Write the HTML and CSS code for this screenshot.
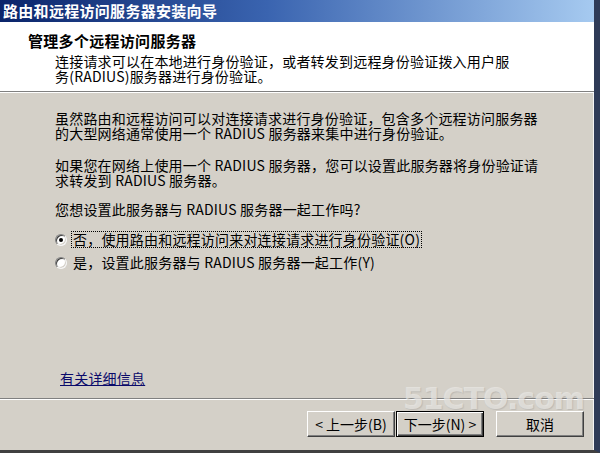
FILE: index.html
```html
<!DOCTYPE html>
<html lang="zh-CN">
  <head>
    <meta charset="UTF-8" />
    <title>路由和远程访问服务器安装向导</title>
    <link rel="stylesheet" href="styles.css">
  </head>
  <body>
    <div class="window">
      <div class="titlebar">路由和远程访问服务器安装向导</div>

      <div class="header">
        <div class="header-title">管理多个远程访问服务器</div>
        <div class="header-sub">
          连接请求可以在本地进行身份验证，或者转发到远程身份验证拨入用户服<br>务(RADIUS)服务器进行身份验证。
        </div>
      </div>

      <div class="content">
        <p class="para">虽然路由和远程访问可以对连接请求进行身份验证，包含多个远程访问服务器<br>的大型网络通常使用一个 RADIUS 服务器来集中进行身份验证。</p>
        <p class="para">如果您在网络上使用一个 RADIUS 服务器，您可以设置此服务器将身份验证请<br>求转发到 RADIUS 服务器。</p>
        <p class="para question">您想设置此服务器与 RADIUS 服务器一起工作吗?</p>

        <div class="options">
          <label class="option">
            <span class="radio checked"></span>
            <span class="option-text focused">否，使用路由和远程访问来对连接请求进行身份验证(<u>O</u>)</span>
          </label>
          <label class="option">
            <span class="radio"></span>
            <span class="option-text">是，设置此服务器与 RADIUS 服务器一起工作(<u>Y</u>)</span>
          </label>
        </div>

        <a class="more-info" href="#">有关详细信息</a>
      </div>

      <div class="footer">
        <button class="btn">&lt; 上一步(<u>B</u>)</button>
        <button class="btn btn-default">下一步(<u>N</u>) &gt;</button>
        <button class="btn btn-cancel">取消</button>
      </div>

      <div class="watermark">51CTO.com</div>
    </div>
  </body>
</html>
```

FILE: styles.css
```css
* {
  margin: 0;
  padding: 0;
  box-sizing: border-box;
}

body {
  width: 600px;
  height: 453px;
  overflow: hidden;
  background: #d4d0c8;
  font-family: 'Noto Sans CJK SC', sans-serif;
  font-size: 14px;
  color: #000;
}

.window {
  position: relative;
  width: 600px;
  height: 453px;
  display: flex;
  flex-direction: column;
  background: #d4d0c8;
  border-right: 6px solid #2f3b57;
  border-bottom: 3px solid #404040;
  box-shadow: inset -1px 0 #f4f4f4;
}

/* title bar */
.titlebar {
  height: 22px;
  padding-left: 3px;
  line-height: 22px;
  font-size: 15px;
  font-weight: bold;
  color: #fff;
  letter-spacing: 0.3px;
  background: linear-gradient(to right, #0a246a 0%, #3a64b0 45%, #a6caf0 100%);
}

/* white header */
.header {
  height: 70px;
  padding: 10px 0 0 28px;
  background: #fff;
  border-bottom: 1px solid #808080;
  box-shadow: 0 1px #fff;
}

.header-title {
  font-size: 15px;
  font-weight: bold;
  line-height: 18px;
  letter-spacing: 0.3px;
}

.header-sub {
  margin: 4px 0 0 27px;
  line-height: 15px;
  letter-spacing: 0.2px;
}

/* wizard page body */
.content {
  flex: 1;
  display: flex;
  flex-direction: column;
  padding: 19px 0 12px 55px;
  border-bottom: 1px solid #808080;
  box-shadow: 0 1px #fff;
}

.para {
  line-height: 15px;
  letter-spacing: 0.2px;
  margin-bottom: 17px;
}

.question {
  margin-top: -3px;
  margin-bottom: 15px;
}

.options {
  display: flex;
  flex-direction: column;
  gap: 8px;
}

.option {
  display: flex;
  align-items: center;
  height: 15px;
  line-height: 15px;
}

.option u {
  text-decoration: none;
}

.radio {
  position: relative;
  width: 12px;
  height: 12px;
  margin-right: 4px;
  border-radius: 50%;
  background: #fff;
  border: 1px solid;
  border-color: #808080 #f4f4f4 #f4f4f4 #808080;
  box-shadow: inset 1px 1px #404040, inset -1px -1px #d4d0c8;
}

.radio.checked::after {
  content: '';
  position: absolute;
  left: 3px;
  top: 3px;
  width: 4px;
  height: 4px;
  border-radius: 50%;
  background: #000;
}

.option-text {
  padding: 0 1px;
  border: 1px dotted transparent;
  letter-spacing: 0.2px;
}

.option-text.focused {
  border-color: #000;
}

.more-info {
  margin-top: auto;
  margin-left: 5px;
  align-self: flex-start;
  line-height: 15px;
  color: #0a0a6a;
  text-decoration: underline;
  letter-spacing: 0.2px;
}

/* button row */
.footer {
  flex: 0 0 51px;
  display: flex;
  justify-content: flex-end;
  align-items: flex-start;
  padding: 12px 10px 0 0;
}

.btn {
  width: 88px;
  height: 26px;
  font-family: 'Noto Sans CJK SC', sans-serif;
  font-size: 14px;
  color: #000;
  background: #d4d0c8;
  border: 1px solid;
  border-color: #fff #404040 #404040 #fff;
  box-shadow: inset -1px -1px #808080;
}

.btn u {
  text-decoration: none;
}

.btn-default {
  margin-left: 1px;
  border: 1px solid #000;
  box-shadow: inset 1px 1px #fff, inset -1px -1px #404040, inset -2px -2px #808080;
}

.btn-cancel {
  margin-left: 12px;
}

/* faint blog stamp in the bottom corner */
.watermark {
  position: absolute;
  right: 10px;
  top: 384px;
  pointer-events: none;
  font-family: 'DejaVu Sans', sans-serif;
  font-size: 30px;
  font-weight: bold;
  letter-spacing: -1px;
  line-height: 1;
  color: rgba(236, 234, 230, 0.7);
  text-shadow: 1px 1px 1px rgba(140, 140, 140, 0.3);
}
```
